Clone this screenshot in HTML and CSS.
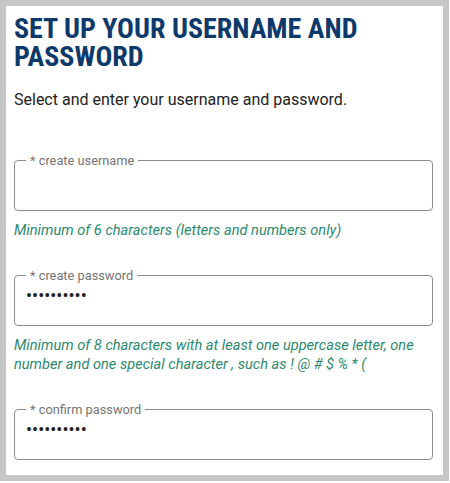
FILE: index.html
```html
<!DOCTYPE html>
<html>
<head>
<meta charset="utf-8">
<link rel="stylesheet" href="styles.css">
</head>
<body>
<div class="panel">
  <h1 class="title">SET UP YOUR USERNAME AND PASSWORD</h1>
  <p class="intro">Select and enter your username and password.</p>

  <fieldset class="field">
    <legend class="label">* create username</legend>
    <input class="input" type="text" value="">
  </fieldset>
  <p class="hint">Minimum of 6 characters (letters and numbers only)</p>

  <fieldset class="field">
    <legend class="label">* create password</legend>
    <input class="input" type="password" value="abcdefghij">
  </fieldset>
  <p class="hint">Minimum of 8 characters with at least one uppercase letter, one number and one special character , such as ! @ # $ % * (</p>

  <fieldset class="field">
    <legend class="label">* confirm password</legend>
    <input class="input" type="password" value="abcdefghij">
  </fieldset>
</div>
</body>
</html>
```

FILE: styles.css
```css
html, body {
  margin: 0;
  padding: 0;
  background: #fff;
}
.panel {
  box-sizing: border-box;
  width: 449px;
  height: 481px;
  border: 6px solid #c6c6c6;
  padding: 9px 10px 0 8px;
  font-family: Roboto, "Noto Sans", sans-serif;
  overflow: hidden;
}
.title {
  margin: 0;
  font-family: "Roboto Condensed", "Liberation Sans Narrow", "DejaVu Sans Condensed", Roboto, sans-serif;
  font-stretch: condensed;
  font-weight: 700;
  font-size: 28px;
  line-height: 28px;
  color: #0d3a6b;
}
.intro {
  margin: 19px 0 0;
  font-size: 16px;
  line-height: 20px;
  color: #222;
}
.field {
  margin: 43px 0 0;
  padding: 0 11px 0;
  border: 1px solid #8c8c8c;
  border-radius: 4px;
  height: 58px;
  box-sizing: border-box;
}
.label {
  padding: 0 4px;
  font-size: 12.8px;
  line-height: 15px;
  color: #757575;
}
.input {
  display: block;
  width: 100%;
  border: 0;
  padding: 0;
  margin: 3px 0 0;
  font-family: Roboto, sans-serif;
  font-size: 18px;
  line-height: 20px;
  color: #222;
  background: transparent;
  outline: none;
}
.hint {
  margin: 10px 0 0;
  font-style: italic;
  font-size: 14.6px;
  line-height: 19px;
  color: #2d8a70;
}
.hint + .field {
  margin-top: 28px;
}
```
